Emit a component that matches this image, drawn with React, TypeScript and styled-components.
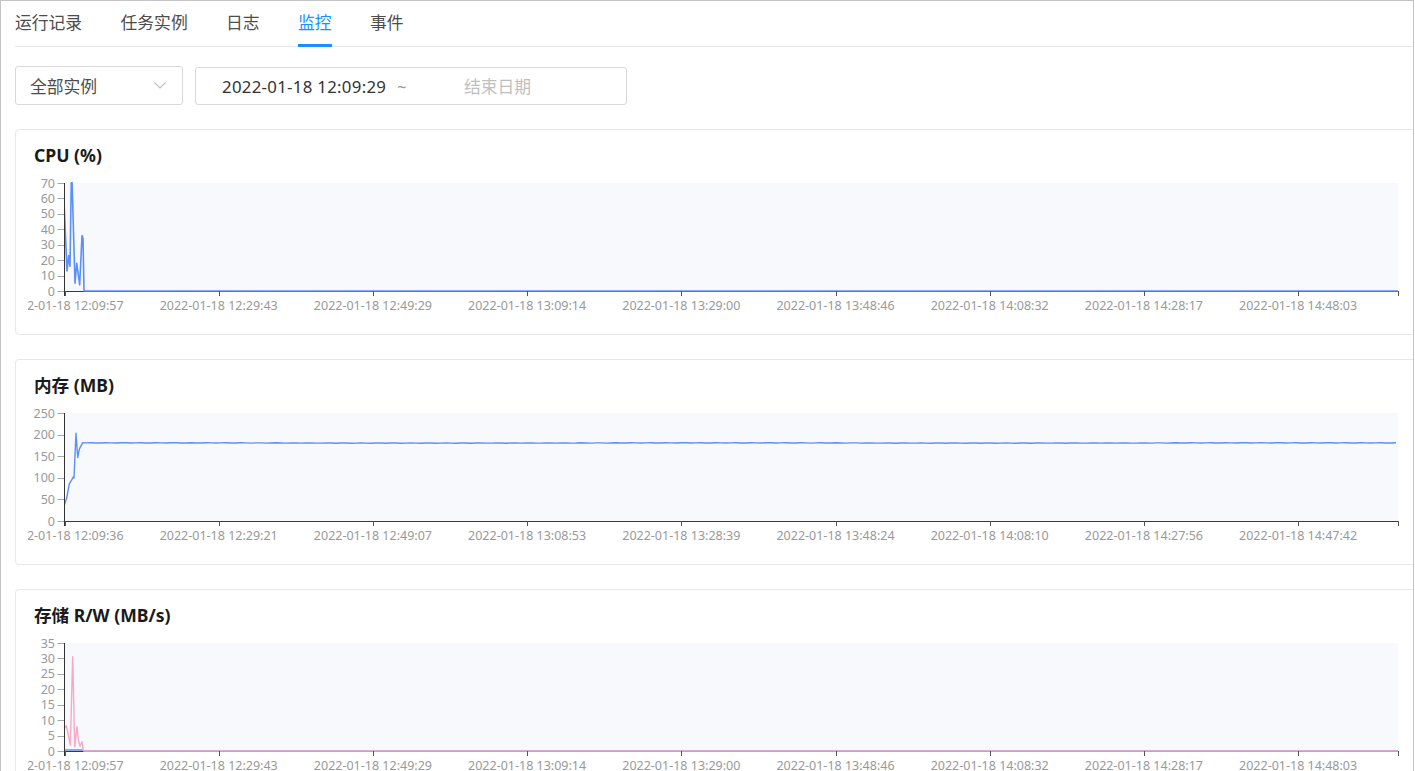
import React from "react";
import styled, { createGlobalStyle } from "styled-components";

const GlobalStyle = createGlobalStyle`
  html, body { margin: 0; padding: 0; background: #fff; overflow: hidden; }
  body { font-family: "Noto Sans", "Noto Sans CJK SC", sans-serif; }
  * { box-sizing: border-box; }
`;

const Frame = styled.div`
  width: 1414px;
  min-height: 820px;
  border: 1px solid #c4c4c4;
  border-bottom: none;
  padding-left: 14px;
  overflow: hidden;
`;

const TabNav = styled.div`
  display: flex;
  height: 46px;
  border-bottom: 1px solid #e8e8e8;
`;

const Tab = styled.div<{ $active?: boolean }>`
  position: relative;
  display: flex;
  align-items: center;
  height: 45px;
  padding-bottom: 3px;
  margin-right: 38.4px;
  font-size: 16.8px;
  color: ${(p) => (p.$active ? "#1890ff" : "#4d4d4d")};
  white-space: nowrap;
`;

const InkBar = styled.span`
  position: absolute;
  left: 0;
  right: 0;
  bottom: -1px;
  height: 3px;
  background: #1890ff;
`;

const Filters = styled.div`
  display: flex;
  align-items: flex-end;
  gap: 12px;
  margin-top: 19px;
`;

const Select = styled.div`
  width: 168px;
  height: 39px;
  border: 1px solid #d9d9d9;
  border-radius: 3px;
  display: flex;
  align-items: center;
  justify-content: space-between;
  padding: 0 16px 0 14px;
  font-size: 16.8px;
  color: #4d4d4d;
`;

const RangePicker = styled.div`
  width: 432px;
  height: 38px;
  border: 1px solid #d9d9d9;
  border-radius: 3px;
  display: flex;
  align-items: center;
  padding-left: 26px;
  font-size: 16.8px;
  letter-spacing: 0.3px;
`;

const DateValue = styled.span`
  color: #333;
  width: 175px;
  white-space: nowrap;
`;

const Separator = styled.span`
  color: #999;
  width: 67px;
`;

const Placeholder = styled.span`
  color: #bfbfbf;
  letter-spacing: 0;
`;

const Cards = styled.div`
  display: flex;
  flex-direction: column;
  gap: 24px;
  margin-top: 24px;
`;

const Card = styled.div`
  height: 206px;
  margin-right: -30px;
  border: 1px solid #e8e8e8;
  border-radius: 4px;
  padding: 14px 0 0 12px;
`;

const CardTitle = styled.div`
  font-size: 17.6px;
  line-height: 22px;
  font-weight: 700;
  color: #1a1a1a;
  padding-left: 6px;
`;

const ChartSvg = styled.svg`
  display: block;
  margin-top: 4px;
  width: 1400px;
  height: 164px;
`;

const OX = 28; // page x of svg left
const PLOT_TOP = 13;
const PLOT_BOTTOM = 121;
const PLOT_LEFT = 64.5 - OX;
const PLOT_RIGHT = 1398 - OX;

type Series = { color: string; width: number; points: [number, number][] };

type ChartProps = {
  title: string;
  yMax: number;
  yStep: number;
  xLabels: string[];
  series: Series[];
};

const Chart: React.FC<ChartProps> = ({ title, yMax, yStep, xLabels, series }) => {
  const yScale = (v: number) => PLOT_BOTTOM - (v / yMax) * (PLOT_BOTTOM - PLOT_TOP);
  const yTicks: number[] = [];
  for (let v = 0; v <= yMax; v += yStep) yTicks.push(v);
  const xTicks = xLabels.map((_, i) => 64.5 + 154.2 * i - OX);
  const clipId = `clip-${title.replace(/[^a-zA-Z]/g, "")}-${yMax}`;
  return (
    <Card>
      <CardTitle>{title}</CardTitle>
      <ChartSvg viewBox="0 0 1400 164">
        <defs>
          <clipPath id={clipId}>
            <rect x={PLOT_LEFT} y={PLOT_TOP - 1} width={PLOT_RIGHT - PLOT_LEFT} height={PLOT_BOTTOM - PLOT_TOP + 2} />
          </clipPath>
        </defs>
        <rect x={PLOT_LEFT} y={PLOT_TOP} width={PLOT_RIGHT - PLOT_LEFT} height={PLOT_BOTTOM - PLOT_TOP} fill="#f8f9fc" />
        {yTicks.map((v) => (
          <g key={v}>
            <line x1={PLOT_LEFT - 7} x2={PLOT_LEFT} y1={Math.round(yScale(v)) + 0.5} y2={Math.round(yScale(v)) + 0.5} stroke="#a6a6a6" strokeWidth={1} />
            <text x={55 - OX} y={yScale(v)} dy="0.36em" textAnchor="end" fontSize={12.5} fill="#999" fontFamily="Noto Sans, sans-serif">
              {v}
            </text>
          </g>
        ))}
        <line x1={PLOT_LEFT} x2={PLOT_RIGHT} y1={PLOT_BOTTOM + 0.5} y2={PLOT_BOTTOM + 0.5} stroke="#3a3a3a" strokeWidth={1} />
        <g clipPath={`url(#${clipId})`}>
          {series.map((s, i) => (
            <polyline
              key={i}
              points={s.points.map(([px, v]) => `${px - OX},${yScale(v).toFixed(2)}`).join(" ")}
              fill="none"
              stroke={s.color}
              strokeWidth={s.width}
              strokeLinejoin="round"
            />
          ))}
        </g>
        <line x1={PLOT_LEFT} x2={PLOT_LEFT} y1={PLOT_TOP} y2={PLOT_BOTTOM + 5} stroke="#333" strokeWidth={1} />
        {[...xTicks, PLOT_RIGHT].map((x, i) => (
          <line key={i} x1={Math.round(x) + 0.5} x2={Math.round(x) + 0.5} y1={PLOT_BOTTOM} y2={PLOT_BOTTOM + 5} stroke="#555" strokeWidth={1} />
        ))}
        {xLabels.map((l, i) => (
          <text key={l} x={xTicks[i]} y={135} dy="0.36em" textAnchor="middle" fontSize={12.5} fill="#999" fontFamily="Noto Sans, sans-serif">
            {l}
          </text>
        ))}
      </ChartSvg>
    </Card>
  );
};

const labelsA = [
  "2022-01-18 12:09:57",
  "2022-01-18 12:29:43",
  "2022-01-18 12:49:29",
  "2022-01-18 13:09:14",
  "2022-01-18 13:29:00",
  "2022-01-18 13:48:46",
  "2022-01-18 14:08:32",
  "2022-01-18 14:28:17",
  "2022-01-18 14:48:03",
];

const labelsB = [
  "2022-01-18 12:09:36",
  "2022-01-18 12:29:21",
  "2022-01-18 12:49:07",
  "2022-01-18 13:08:53",
  "2022-01-18 13:28:39",
  "2022-01-18 13:48:24",
  "2022-01-18 14:08:10",
  "2022-01-18 14:27:56",
  "2022-01-18 14:47:42",
];

const BLUE = "#5b8ff9";
const PINK = "#f7a8c6";

const cpuPoints: [number, number][] = [
  [64.3, 54], [67, 13], [68.7, 23], [70, 16], [71.3, 72], [72, 72], [75, 5], [76.7, 18],
  [79.7, 4], [82, 36], [83, 34], [84, 0], [1398, 0],
];

const memPoints: [number, number][] = (() => {
  const pts: [number, number][] = [
    [64.3, 37], [66.7, 53], [69.3, 86], [71.7, 95], [73.3, 102], [74, 99.5], [76, 203],
    [77.7, 147], [79.3, 166], [80.3, 171], [82.7, 181],
  ];
  for (let x = 86; x <= 1398; x += 5) {
    const v = 180.6 + 0.35 * Math.sin(x * 0.37) + 0.25 * Math.sin(x * 0.011);
    pts.push([x, v]);
  }
  return pts;
})();

const ioRead: [number, number][] = [
  [64, 7], [66.3, 8.2], [68.3, 5.2], [70.3, 1.9], [72.7, 30.6], [74.7, 1.4], [77, 7.9],
  [78.3, 3.6], [80, 1.6], [82, 3], [83.3, 0.3], [84, 0], [1398, 0],
];

const ioWrite: [number, number][] = [
  [64, 0.3], [83, 0.3], [84, 0], [1398, 0],
];

export default function App() {
  return (
    <>
      <GlobalStyle />
      <Frame>
        <TabNav>
          <Tab>运行记录</Tab>
          <Tab>任务实例</Tab>
          <Tab>日志</Tab>
          <Tab $active>
            监控
            <InkBar />
          </Tab>
          <Tab>事件</Tab>
        </TabNav>
        <Filters>
          <Select>
            <span>全部实例</span>
            <svg width="12" height="7" viewBox="0 0 12 7">
              <polyline points="0.5,0.5 6,6 11.5,0.5" fill="none" stroke="#bfbfbf" strokeWidth="1.1" />
            </svg>
          </Select>
          <RangePicker>
            <DateValue>2022-01-18 12:09:29</DateValue>
            <Separator>~</Separator>
            <Placeholder>结束日期</Placeholder>
          </RangePicker>
        </Filters>
        <Cards>
          <Chart title="CPU (%)" yMax={70} yStep={10} xLabels={labelsA} series={[{ color: BLUE, width: 1.6, points: cpuPoints }]} />
          <Chart title="内存 (MB)" yMax={250} yStep={50} xLabels={labelsB} series={[{ color: BLUE, width: 1.4, points: memPoints }]} />
          <Chart
            title="存储 R/W (MB/s)"
            yMax={35}
            yStep={5}
            xLabels={labelsA}
            series={[
              { color: BLUE, width: 1.4, points: ioWrite },
              { color: PINK, width: 1.4, points: ioRead },
            ]}
          />
        </Cards>
      </Frame>
    </>
  );
}
